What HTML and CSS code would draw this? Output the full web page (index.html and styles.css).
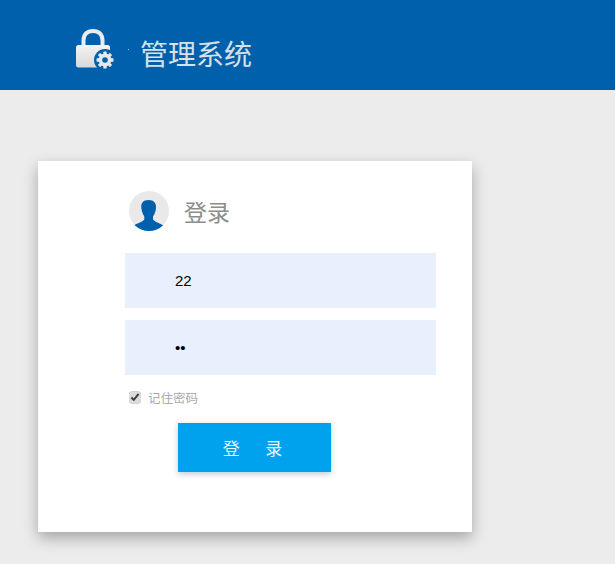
FILE: index.html
```html
<!DOCTYPE html>
<html lang="zh-CN">

<head>
    <meta charset="UTF-8">
    <meta name="viewport" content="width=device-width, initial-scale=1.0">
    <title>管理系统</title>
    <link rel="stylesheet" href="styles.css">
</head>

<body>
    <div class="header">
        <svg class="logo" width="40" height="42" viewBox="0 0 40 42">
            <defs>
                <linearGradient id="lock-fill" x1="0" y1="0" x2="0" y2="1">
                    <stop offset="0" stop-color="#f4f4f4"/>
                    <stop offset="1" stop-color="#d8d8d8"/>
                </linearGradient>
            </defs>
            <path d="M7.500 18V11.500C7.500 5.500 11 2 17 2S26.500 5.500 26.500 11.500V18" fill="none" stroke="#ececec" stroke-width="4"/>
            <rect x="0" y="16" width="34" height="22.500" rx="2.500" fill="url(#lock-fill)"/>
            <circle cx="29" cy="31" r="11" fill="#0060ac"/>
            <g fill="#e8e8e8">
                <circle cx="29" cy="31" r="6.500"/>
                <rect x="27.300" y="22.500" width="3.400" height="17" rx="0.600"/>
                <rect x="27.300" y="22.500" width="3.400" height="17" rx="0.600" transform="rotate(45 29 31)"/>
                <rect x="27.300" y="22.500" width="3.400" height="17" rx="0.600" transform="rotate(90 29 31)"/>
                <rect x="27.300" y="22.500" width="3.400" height="17" rx="0.600" transform="rotate(135 29 31)"/>
            </g>
            <circle cx="29" cy="31" r="2.800" fill="#0060ac"/>
        </svg>
        <span class="speck"></span>
        <h1 class="system-name">管理系统</h1>
    </div>

    <div class="login-card">
        <div class="login-title">
            <svg class="avatar" width="40" height="40" viewBox="0 0 40 40">
                <defs>
                    <clipPath id="avatar-clip">
                        <circle cx="20" cy="20" r="20"/>
                    </clipPath>
                </defs>
                <circle cx="20" cy="20" r="20" fill="#e9e9e9"/>
                <g clip-path="url(#avatar-clip)" fill="#0060ac">
                    <path d="M19.500 9C14 9 11.800 12.500 12.300 17C12.700 20.500 14 23.500 15.300 25.500V28.500C13 31.500 7 32 3 36V40H36V36C32 32 26.500 31.500 24 28.500V25.500C25.500 23.500 26.700 20.500 27 17C27.400 12.500 25 9 19.500 9Z"/>
                </g>
            </svg>
            <h2>登录</h2>
        </div>

        <input class="text-input" type="text" value="22">
        <input class="text-input" type="password" value="22">

        <label class="remember">
            <input type="checkbox" checked>
            <span>记住密码</span>
        </label>

        <button class="login-btn">登 录</button>
    </div>
</body>

</html>
```

FILE: styles.css
```css
body {
    margin: 0;
    min-height: 564px;
    background: #ececec;
    font-family: "Liberation Sans", "Noto Sans CJK SC", sans-serif;
}

.header {
    display: flex;
    align-items: center;
    height: 90px;
    padding-left: 76px;
    background: #0060ac;
}

.logo {
    flex: none;
    margin-top: 10px;
}

.speck {
    width: 1px;
    height: 1px;
    margin: 8px 0 0 12px;
    background: #9dbfdc;
}

.system-name {
    margin: 16px 0 0 11px;
    font-size: 28px;
    font-weight: normal;
    color: #d8e0e8;
}

.login-card {
    box-sizing: border-box;
    width: 434px;
    height: 371px;
    margin: 71px 0 0 38px;
    padding: 30px 36px 0 87px;
    background: white;
    box-shadow: 0 6px 14px rgba(0, 0, 0, 0.3);
}

.login-title {
    display: flex;
    align-items: center;
    gap: 15px;
    padding-left: 4px;
    margin-bottom: 22px;
}

.avatar {
    flex: none;
}

.login-title h2 {
    margin: 0;
    font-size: 23px;
    font-weight: normal;
    color: #8c8c8c;
}

.text-input {
    display: block;
    box-sizing: border-box;
    width: 311px;
    height: 55px;
    margin-bottom: 12px;
    padding: 0 0 0 50px;
    border: none;
    outline: none;
    background: #e8f0fe;
    font-family: "Liberation Sans", sans-serif;
    font-size: 15px;
    color: black;
}

.remember {
    display: flex;
    align-items: center;
    gap: 7px;
    height: 18px;
    padding: 1px 0 0 4px;
    font-size: 12.500px;
    color: #aaa;
}

.remember input {
    width: 12px;
    height: 13px;
    margin: 0;
    accent-color: #dcdcdc;
}

.login-btn {
    display: block;
    width: 153px;
    height: 49px;
    margin: 17px 0 0 53px;
    padding: 0 9px 0 5px;
    border: none;
    background: #00a2ed;
    color: #e6f6ff;
    font-family: "Liberation Sans", "Noto Sans CJK SC", sans-serif;
    font-size: 17px;
    word-spacing: 21px;
    box-shadow: 0 2px 6px rgba(0, 40, 80, 0.25);
    cursor: pointer;
}
```
